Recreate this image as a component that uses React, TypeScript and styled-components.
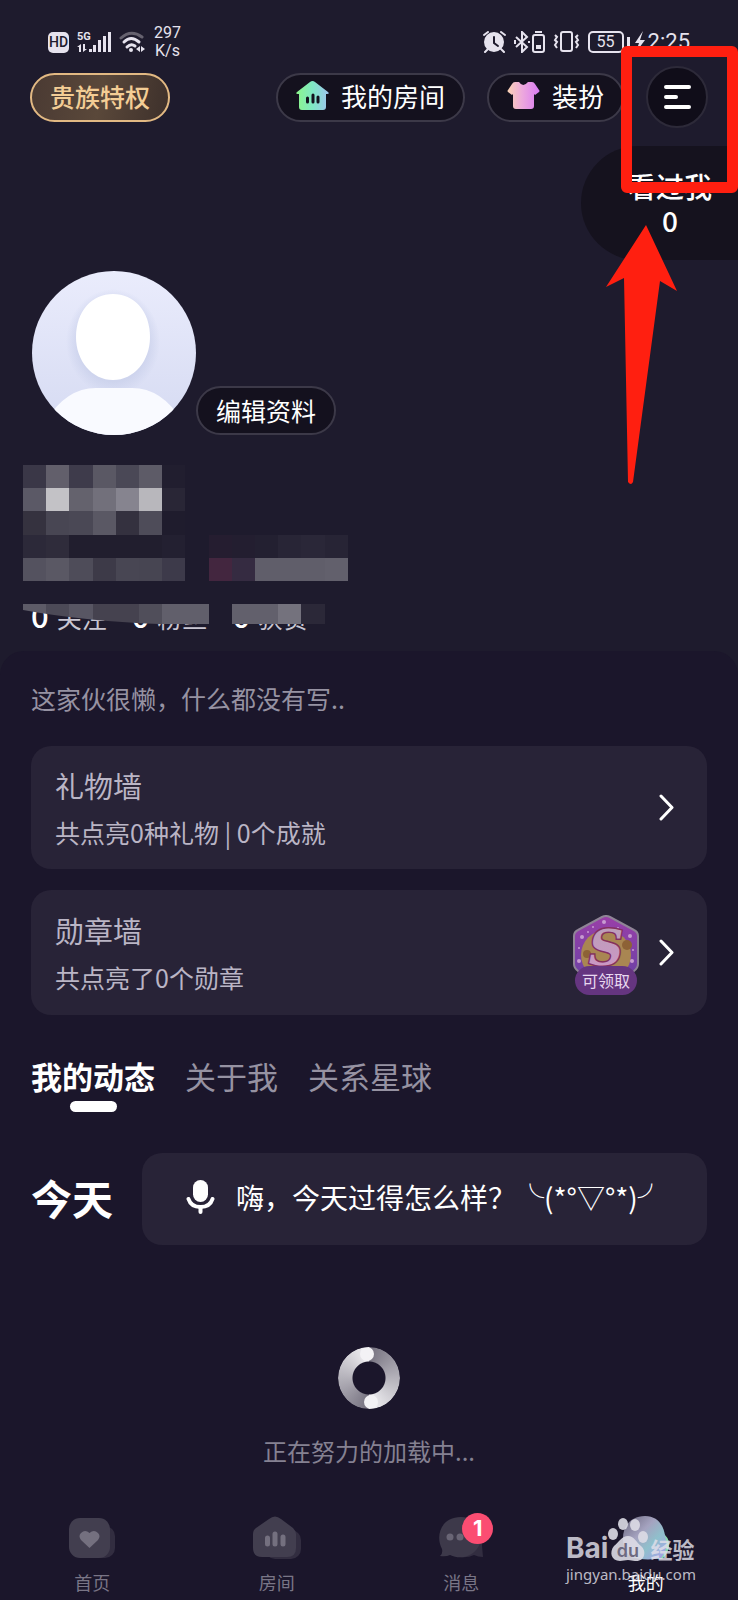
import React from "react";
import styled, { createGlobalStyle } from "styled-components";

const GlobalStyle = createGlobalStyle`
  *, *::before, *::after { box-sizing: border-box; }
  body {
    margin: 0;
    background: #1e1b2d;
    color: #fff;
    font-family: "Noto Sans CJK SC", "Noto Sans", sans-serif;
  }
  button { font: inherit; color: inherit; border: 0; background: none; padding: 0; cursor: pointer; }
  a { color: inherit; text-decoration: none; }
  h2, p { margin: 0; font-weight: 400; }
  svg { display: block; flex: none; }
`;

const Page = styled.div`
  position: relative;
  min-height: 100vh;
  display: flex;
  flex-direction: column;
  overflow: hidden;
`;

/* ---------- status bar ---------- */

const StatusBar = styled.div`
  height: 66px;
  padding: 18px 48px 0;
  display: flex;
  justify-content: space-between;
  align-items: center;
  color: #e6e3ee;
  font-family: Roboto, "Noto Sans", sans-serif;
`;

const StatusGroup = styled.div<{ $gap: number }>`
  display: flex;
  align-items: center;
  gap: ${(p) => p.$gap}px;
`;

const HdTag = styled.span`
  width: 21px;
  height: 21px;
  border-radius: 5px;
  background: #e6e3ee;
  color: #1e1b2d;
  font-size: 14px;
  line-height: 21px;
  font-weight: 500;
  text-align: center;
`;

const NetSpeed = styled.span`
  font-size: 16px;
  line-height: 18px;
  text-align: center;
`;

const BatteryLevel = styled.span`
  width: 36px;
  height: 22px;
  border: 2px solid #e6e3ee;
  border-radius: 5px;
  font-size: 16px;
  line-height: 18px;
  text-align: center;
`;

const Clock = styled.span`
  font-size: 22px;
  line-height: 26px;
`;

/* ---------- header ---------- */

const Header = styled.header`
  height: 62px;
  padding: 0 30px;
  display: flex;
  align-items: center;
  gap: 22px;
`;

const Spacer = styled.div`
  flex: 1;
`;

const Pill = styled.button<{ $size: number }>`
  height: 49px;
  padding: 0 18px 2px;
  display: flex;
  align-items: center;
  gap: 12px;
  border: 2px solid #3c3948;
  border-radius: 25px;
  background: #14111e;
  font-size: ${(p) => p.$size}px;
  line-height: 34px;
  white-space: nowrap;
`;

const NoblePill = styled(Pill)`
  border-color: #e2b983;
  background: linear-gradient(100deg, #4a3a33, #5a483a 50%, #3d302b);
  color: #f3cd95;
  font-weight: 500;
`;

const MenuButton = styled.button`
  width: 62px;
  height: 62px;
  display: flex;
  align-items: center;
  justify-content: center;
  border: 2px solid #2d2a39;
  border-radius: 50%;
  background: #100d19;
`;

/* ---------- profile ---------- */

const Visitors = styled.a`
  align-self: flex-end;
  width: 157px;
  height: 114px;
  margin-top: 18px;
  padding: 23px 0 0 21px;
  border-radius: 57px 0 0 57px;
  background: #15121e;
  font-size: 28px;
  line-height: 34px;
  text-align: center;
`;

const VisitorLine = styled.div`
  font-weight: 500;
`;

const ProfileRow = styled.div`
  margin-top: 11px;
  padding: 0 32px;
  display: flex;
  align-items: flex-end;
`;

const Identity = styled.section`
  position: relative;
  margin: 30px 23px 0;
  padding: 133px 0 19px 8px;
`;

const Mosaic = styled.svg`
  position: absolute;
  left: 0;
  top: 0;
`;

const Stats = styled.div`
  display: flex;
  gap: 25px;
  font-size: 25px;
  line-height: 34px;
  color: #c9c6d2;
`;

const Stat = styled.span`
  height: 34px;
  display: flex;
  align-items: baseline;
  gap: 8px;

  b { font-size: 31px; font-weight: 500; color: #fff; }
`;

/* ---------- content panel ---------- */

const Panel = styled.main`
  flex: 1;
  padding: 30px 31px 0;
  border-radius: 24px 24px 0 0;
  background: #1b162b;
  display: flex;
  flex-direction: column;
`;

const Bio = styled.p`
  font-size: 25px;
  line-height: 34px;
  color: #9692a2;
`;

const CardList = styled.div`
  margin-top: 31px;
  display: flex;
  flex-direction: column;
  gap: 21px;
`;

const Card = styled.a`
  padding: 19px 33px 20px 24px;
  display: flex;
  align-items: center;
  gap: 20px;
  border-radius: 20px;
  background: #282337;
  color: #bab5c5;
`;

const CardText = styled.div`
  flex: 1;
`;

const CardTitle = styled.h2`
  font-size: 29px;
  line-height: 40px;
`;

const CardNote = styled.p`
  margin-top: 10px;
  font-size: 25px;
  line-height: 34px;
`;

const Medal = styled.div`
  width: 66px;
  padding-top: 6px;
  display: flex;
  flex-direction: column;
  align-items: center;
`;

const MedalLabel = styled.span`
  position: relative;
  width: 62px;
  height: 29px;
  margin-top: -17px;
  border-radius: 15px;
  background: #653580;
  color: #e8d8f0;
  font-size: 16px;
  line-height: 28px;
  text-align: center;
`;

const Tabs = styled.nav`
  margin-top: 40px;
  display: flex;
  gap: 30px;
`;

const Tab = styled.button<{ $active?: boolean }>`
  height: 57px;
  display: flex;
  flex-direction: column;
  align-items: center;
  gap: 4px;
  font-size: 31px;
  line-height: 42px;
  font-weight: ${(p) => (p.$active ? 700 : 400)};
  color: ${(p) => (p.$active ? "#fff" : "#9692a2")};

  &::after {
    content: "";
    width: 47px;
    height: 11px;
    border-radius: 6px;
    background: ${(p) => (p.$active ? "#fff" : "transparent")};
  }
`;

const TodayRow = styled.section`
  margin-top: 41px;
  display: flex;
  align-items: center;
  gap: 29px;
`;

const TodayTitle = styled.h2`
  padding-bottom: 4px;
  font-size: 41px;
  line-height: 58px;
  font-weight: 700;
  white-space: nowrap;
`;

const MoodButton = styled.button`
  flex: 1;
  height: 92px;
  padding: 0 0 4px 44px;
  display: flex;
  align-items: center;
  gap: 21px;
  border-radius: 20px;
  background: #282337;
  font-size: 28px;
  line-height: 42px;
  white-space: nowrap;
`;

const Loading = styled.div`
  margin-top: 102px;
  display: flex;
  flex-direction: column;
  align-items: center;
  gap: 25px;
  font-size: 24px;
  line-height: 34px;
  color: #858192;
`;

/* ---------- bottom navigation ---------- */

const BottomNav = styled.nav`
  padding: 47px 0 5px;
  display: flex;
  background: #1b162b;
`;

const NavItem = styled.a<{ $active?: boolean }>`
  flex: 1;
  display: flex;
  flex-direction: column;
  align-items: center;
  gap: 9px;
  font-size: 18px;
  line-height: 26px;
  color: ${(p) => (p.$active ? "#fff" : "#797586")};
`;

const NavIcon = styled.span`
  position: relative;
  display: block;
`;

const Badge = styled.span`
  position: absolute;
  left: 24px;
  top: -3px;
  width: 31px;
  height: 31px;
  border-radius: 50%;
  background: #fb4d72;
  color: #fff;
  font: 700 22px/31px Inter, sans-serif;
  text-align: center;
`;

/* ---------- overlays ---------- */

const Highlight = styled.div`
  position: absolute;
  top: 46px;
  right: 0;
  width: 117px;
  height: 147px;
  border: 11px solid #ff1f10;
  border-radius: 6px;
  pointer-events: none;
`;

const Arrow = styled.svg`
  position: absolute;
  top: 225px;
  right: 60px;
  pointer-events: none;
`;

const Watermark = styled.div`
  position: absolute;
  right: 40px;
  bottom: 14px;
  width: 132px;
  color: rgba(226, 224, 234, 0.82);
  pointer-events: none;
`;

const WatermarkLogo = styled.div`
  height: 48px;
  display: flex;
  align-items: flex-end;
  font: 700 28px/28px Inter, sans-serif;
`;

const WatermarkCn = styled.span`
  font: 700 22px/28px "Noto Sans CJK SC", sans-serif;
  white-space: nowrap;
`;

const WatermarkUrl = styled.div`
  font: 400 15px/24px "Noto Sans", sans-serif;
  white-space: nowrap;
`;

/* ---------- drawings ---------- */

const SignalIcon = () => (
  <svg width="34" height="22" viewBox="0 0 34 22" fill="#e6e3ee">
    <text x="0" y="9" fontSize="11" fontWeight="700" fontFamily="Roboto, sans-serif">5G</text>
    <path d="M0 16l4-3v8H2v-5zM6 13h2v5h2l-4 3zM12 18h3v3h-3zM16 14h3v7h-3zM21 9h3v12h-3zM26 5h3v16h-3zM31 1h3v20h-3z" />
  </svg>
);

const WifiIcon = () => (
  <svg width="27" height="23" viewBox="0 0 27 23" fill="none" stroke="#e6e3ee" strokeWidth="3" strokeLinecap="round">
    <path d="M2 7Q12-2 23 6" stroke="#66626f" />
    <path d="M5 11Q12 4 20 11M8 16Q12 12 16 15" />
    <circle cx="12" cy="19" r="2" fill="#e6e3ee" stroke="none" />
    <path d="M21 15v6l-4-3zM22 15v6l4-3z" fill="#e6e3ee" stroke="none" />
  </svg>
);

const AlarmIcon = () => (
  <svg width="23" height="22" viewBox="0 0 23 22" fill="none" stroke="#e6e3ee" strokeWidth="2" strokeLinecap="round">
    <circle cx="11" cy="11" r="9" fill="#e6e3ee" />
    <path d="M1 4l4-3M22 4l-4-3M5 18l-3 3M18 18l3 3" />
    <path d="M11 6v6l4 3" stroke="#1e1b2d" />
  </svg>
);

const BluetoothIcon = () => (
  <svg width="31" height="22" viewBox="0 0 31 22" fill="none" stroke="#e6e3ee" strokeWidth="2">
    <path d="M2 6l11 10-5 5V1l5 5L2 16M1 9v4M15 10v2" />
    <rect x="19" y="4" width="11" height="17" rx="2" />
    <path d="M21 1h7" />
    <path d="M22 14h5v4h-5z" fill="#e6e3ee" stroke="none" />
  </svg>
);

const VibrateIcon = () => (
  <svg width="27" height="22" viewBox="0 0 27 22" fill="none" stroke="#e6e3ee" strokeWidth="2">
    <rect x="8" y="1" width="11" height="19" rx="2" />
    <path d="M2 4l2 2-2 3 2 2-2 3 2 3M25 4l-2 2 2 3-2 2 2 3-2 3" />
  </svg>
);

const BoltIcon = () => (
  <svg width="18" height="22" viewBox="0 0 18 22" fill="#e6e3ee">
    <path d="M0 6h3v11H0zM16 0L8 12h4l-3 9 9-12h-5z" />
  </svg>
);

const HouseIcon = () => (
  <svg width="33" height="30" viewBox="0 0 33 30">
    <defs>
      <linearGradient id="house" x1="0" y1="0" x2="1" y2="0">
        <stop offset="0" stopColor="#8cf58a" />
        <stop offset="0.5" stopColor="#7fe8c4" />
        <stop offset="1" stopColor="#9fc4ef" />
      </linearGradient>
    </defs>
    <path d="M14 1q2.500-2 5 0l13 10q2 2-1 2h-1v13q0 3-3 3H6q-3 0-3-3V13H2q-3 0-1-2z" fill="url(#house)" />
    <path d="M11.500 17v4M17 14v7M22 16v5" stroke="#14111e" strokeWidth="3" strokeLinecap="round" />
  </svg>
);

const ShirtIcon = () => (
  <svg width="33" height="30" viewBox="0 0 33 30">
    <defs>
      <linearGradient id="shirt" x1="0" y1="0" x2="1" y2="0">
        <stop offset="0" stopColor="#fbd3b4" />
        <stop offset="0.45" stopColor="#eda9dc" />
        <stop offset="1" stopColor="#d97bf3" />
      </linearGradient>
    </defs>
    <path d="M8 1h4q4 6 9 0h4q2 0 3 2l4 6q1 1 0 2l-4 3-1-1v12q0 3-3 3H9q-3 0-3-3V13l-1 1-4-3q-1-1 0-2l4-6q1-2 3-2z" fill="url(#shirt)" />
  </svg>
);

const MenuIcon = () => (
  <svg width="28" height="26" viewBox="0 0 28 26" stroke="#fff" strokeWidth="4" strokeLinecap="round">
    <path d="M3 3h23M3 13h10M3 23h23" />
  </svg>
);

const AvatarPicture = () => (
  <svg width="164" height="164" viewBox="0 0 164 164" role="img" aria-label="头像">
    <defs>
      <linearGradient id="avatarBg" x1="0" y1="0" x2="0" y2="1">
        <stop offset="0" stopColor="#eaecfc" />
        <stop offset="1" stopColor="#d5daf2" />
      </linearGradient>
      <radialGradient id="headShade">
        <stop offset="0.75" stopColor="#c8cfea" stopOpacity="0.7" />
        <stop offset="1" stopColor="#c8cfea" stopOpacity="0" />
      </radialGradient>
      <clipPath id="avatarClip"><circle cx="82" cy="82" r="82" /></clipPath>
    </defs>
    <g clipPath="url(#avatarClip)">
      <rect width="164" height="164" fill="url(#avatarBg)" />
      <ellipse cx="81" cy="71" rx="47" ry="53" fill="url(#headShade)" />
      <path d="M44 66C44 40 60 23 81 23s37 17 37 43c0 24-16 43-37 43S44 90 44 66z" fill="#fff" />
      <path d="M14 150Q34 117 64 117h36q30 0 50 33v20H14z" fill="#f9faff" />
    </g>
  </svg>
);

const CELL = 23.2;
const mosaicRows: { x: number; y: number; colors: string[] }[] = [
  { x: 0, y: 0, colors: ["#3a3747", "#625f6b", "#3e3b4b", "#5a5864", "#4a4856", "#5d5b67", "#211e2f"] },
  { x: 0, y: 1, colors: ["#5b5966", "#c3c2c6", "#64626d", "#72707b", "#86848f", "#b8b7bc", "#292636"] },
  { x: 0, y: 2, colors: ["#35323f", "#484653", "#4a4855", "#5a5864", "#34313f", "#4e4c59", "#1f1c2d"] },
  { x: 0, y: 3, colors: ["#2c2939", "#2f2c3b", "#211e2e", "#211e2e", "#211e2e", "#211e2e", "#232031"] },
  { x: 0, y: 4, colors: ["#54525f", "#5a5864", "#4e4c59", "#3d3a48", "#484653", "#474552", "#3d3a4a"] },
  { x: 8, y: 3, colors: ["#251d30", "#231e30", "#232031", "#282536", "#2a2738", "#272435"] },
  { x: 8, y: 4, colors: ["#43263f", "#352b41", "#605e6a", "#605e6a", "#605e6a", "#62606c"] },
];
const stripColors = ["#5d5b67", "#4c4a57", "#585663", "#45424f", "#45424f", "#504e5a", "#615f6b", "#615f6b"];
const stripTail = ["#62606c", "#62606c", "#74727d", "#2b2838"];

const NameMosaic = () => (
  <Mosaic width="326" height="160" viewBox="0 0 326 160" shapeRendering="crispEdges" aria-hidden="true">
    <defs>
      <clipPath id="strip"><path d="M0 139h326v20H136Q60 156 0 145z" /></clipPath>
    </defs>
    {mosaicRows.map((row) =>
      row.colors.map((c, i) => (
        <rect key={`${row.x}-${row.y}-${i}`} x={(row.x + i) * CELL} y={row.y * CELL} width={CELL} height={CELL} fill={c} />
      ))
    )}
    <g clipPath="url(#strip)">
      {stripColors.map((c, i) => <rect key={i} x={i * CELL} y="139" width={CELL} height="20" fill={c} />)}
      {stripTail.map((c, i) => <rect key={i} x={(9 + i) * CELL} y="139" width={CELL} height="20" fill={c} />)}
    </g>
  </Mosaic>
);

const Chevron = () => (
  <svg width="15" height="27" viewBox="0 0 15 27" fill="none" stroke="#fff" strokeWidth="3" strokeLinecap="round" strokeLinejoin="round">
    <path d="M2 2l11 11.500L2 25" />
  </svg>
);

const MedalPicture = () => (
  <svg width="66" height="68" viewBox="0 0 66 68" aria-hidden="true">
    <defs>
      <linearGradient id="medalBg" x1="0" y1="0" x2="0" y2="1">
        <stop offset="0" stopColor="#9a3fa8" />
        <stop offset="1" stopColor="#6a41a5" />
      </linearGradient>
      <linearGradient id="medalS" x1="0" y1="0" x2="0" y2="1">
        <stop offset="0" stopColor="#b9a0b8" />
        <stop offset="1" stopColor="#cf95c6" />
      </linearGradient>
      <clipPath id="medalClip"><path d="M33 3L63 18v36L54 66H12L3 54V18z" /></clipPath>
    </defs>
    <path d="M29 2q4-2 8 0l24 13q4 2 4 6v28q0 4-4 7l-10 9H15L5 56q-4-3-4-7V21q0-4 4-6z" fill="url(#medalBg)" stroke="#8f8496" strokeWidth="2" />
    <g clipPath="url(#medalClip)">
      <circle cx="33" cy="40" r="25" fill="#a98652" />
      <circle cx="54" cy="30" r="5" fill="#8d6236" />
      <circle cx="14" cy="39" r="4" fill="#8d6236" />
      <g fill="#c79bd0">
        <circle cx="31" cy="7" r="2" /><circle cx="20" cy="12" r="1" /><circle cx="45" cy="13" r="1" />
        <circle cx="9" cy="22" r="2" /><circle cx="57" cy="21" r="2" /><circle cx="15" cy="17" r="1" />
        <circle cx="6" cy="33" r="1" /><circle cx="60" cy="35" r="1" /><circle cx="6" cy="46" r="2" /><circle cx="59" cy="46" r="2" />
      </g>
      <text x="33" y="50" textAnchor="middle" fontFamily="'DejaVu Serif', serif" fontWeight="700" fontStyle="italic" fontSize="48" fill="url(#medalS)" stroke="#84305f" strokeWidth="3" paintOrder="stroke">S</text>
    </g>
  </svg>
);

const MicIcon = () => (
  <svg width="29" height="36" viewBox="0 0 29 36" fill="none" stroke="#fff" strokeLinecap="round">
    <rect x="7" y="1" width="15" height="22" rx="7.500" fill="#fff" stroke="none" />
    <path d="M2.500 20Q5 28 14.500 28T26.500 20" strokeWidth="4" />
    <path d="M14.500 29v4" strokeWidth="4" />
  </svg>
);

const Ring = styled.div`
  position: relative;
  width: 62px;
  height: 62px;
  border-radius: 50%;
  background: conic-gradient(#75717f, #f3f2f5 50%, #75717f 50%, #f3f2f5);
  mask: radial-gradient(circle, transparent 16px, #000 17px);

  &::before,
  &::after {
    content: "";
    position: absolute;
    width: 14px;
    height: 14px;
    border-radius: 50%;
    background: #f3f2f5;
  }
  &::before { left: 22px; top: 0; }
  &::after { left: 26px; bottom: 0; }
`;

const HomeIcon = () => (
  <svg width="46" height="44" viewBox="0 0 46 44">
    <rect x="9" y="10" width="37" height="32" rx="10" fill="#322d40" />
    <rect x="0" y="2" width="41" height="40" rx="11" fill="#423e4f" />
    <path d="M20.500 32L12 24q-3-4 0-7 4-4 8.500 0 4.500-4 8.500 0 3 3 0 7z" fill="#74707f" />
  </svg>
);

const RoomIcon = () => (
  <svg width="48" height="44" viewBox="0 0 48 44">
    <rect x="12" y="14" width="36" height="29" rx="10" fill="#322d40" />
    <path d="M16 3q6-5 12 0l12 9q3 3 3 6v14q0 9-9 9H9q-9 0-9-9V18q0-4 3-6z" fill="#423e4f" />
    <path d="M14.500 22v6M22 18v10M30 21v7" stroke="#74707f" strokeWidth="5" strokeLinecap="round" />
  </svg>
);

const MessageIcon = () => (
  <svg width="46" height="44" viewBox="0 0 46 44">
    <path d="M26 8c12 0 20 10 18 22l1 11q-5 0-9-2-6 3-14 2z" fill="#322d40" />
    <path d="M2 40q3-2 2-7C-3 20 3 1 23 1c13 0 20 9 20 20 0 15-16 25-31 18q-4 2-10 1z" fill="#3d394a" />
    <circle cx="12" cy="21" r="3.500" fill="#696575" />
    <circle cx="22" cy="21" r="3.500" fill="#696575" />
  </svg>
);

const MineIcon = () => (
  <svg width="48" height="44" viewBox="0 0 48 44">
    <defs>
      <linearGradient id="mineBg" x1="0" y1="0" x2="1" y2="1">
        <stop offset="0" stopColor="#68647a" />
        <stop offset="0.4" stopColor="#a5a3c0" />
        <stop offset="0.65" stopColor="#8fc0cc" />
        <stop offset="1" stopColor="#a99bea" />
      </linearGradient>
    </defs>
    <path d="M30 8q8 2 13 11 5 5 4 12-2 8-7 12H22z" fill="#8cdcae" />
    <path d="M23 0c13 0 19 10 20 20 2 5 3 14-4 22-9 2-20 2-30-1C3 36 1 29 1 22 1 9 10 0 23 0z" fill="url(#mineBg)" />
  </svg>
);

const PawIcon = () => (
  <svg width="42" height="44" viewBox="-2 0 42 44">
    <g fill="#dddbe5" fillOpacity="0.9">
      <ellipse cx="3" cy="16" rx="5" ry="6" />
      <ellipse cx="13" cy="6" rx="5" ry="6" />
      <ellipse cx="25" cy="7" rx="5" ry="6" />
      <ellipse cx="33" cy="19" rx="5" ry="6" />
      <path d="M18 18c6 0 8 6 13 10 6 5 4 16-6 15-3 0-4-1-7-1s-5 1-8 1C1 43-1 34 4 28c5-4 8-10 14-10z" />
    </g>
    <text x="18" y="39" textAnchor="middle" fontFamily="Inter, sans-serif" fontWeight="600" fontSize="18" fill="#6d6a80">du</text>
  </svg>
);

export default function App() {
  return (
    <Page>
      <GlobalStyle />
      <StatusBar>
        <StatusGroup $gap={8}>
          <HdTag>HD</HdTag>
          <SignalIcon />
          <WifiIcon />
          <NetSpeed>297<br />K/s</NetSpeed>
        </StatusGroup>
        <StatusGroup $gap={8}>
          <AlarmIcon />
          <BluetoothIcon />
          <VibrateIcon />
          <StatusGroup $gap={3}>
            <BatteryLevel>55</BatteryLevel>
            <BoltIcon />
            <Clock>2:25</Clock>
          </StatusGroup>
        </StatusGroup>
      </StatusBar>

      <Header>
        <NoblePill type="button" $size={25}>贵族特权</NoblePill>
        <Spacer />
        <Pill type="button" $size={26}><HouseIcon />我的房间</Pill>
        <Pill type="button" $size={26}><ShirtIcon />装扮</Pill>
        <MenuButton type="button" aria-label="菜单"><MenuIcon /></MenuButton>
      </Header>

      <Visitors href="#visitors">
        <VisitorLine>看过我</VisitorLine>
        <VisitorLine>0</VisitorLine>
      </Visitors>

      <ProfileRow>
        <AvatarPicture />
        <Pill type="button" $size={25}>编辑资料</Pill>
      </ProfileRow>

      <Identity>
        <Stats>
          <Stat><b>0</b>关注</Stat>
          <Stat><b>0</b>粉丝</Stat>
          <Stat><b>0</b>获赞</Stat>
        </Stats>
        <NameMosaic />
      </Identity>

      <Panel>
        <Bio>这家伙很懒，什么都没有写..</Bio>
        <CardList>
          <Card href="#gifts">
            <CardText>
              <CardTitle>礼物墙</CardTitle>
              <CardNote>共点亮0种礼物 | 0个成就</CardNote>
            </CardText>
            <Chevron />
          </Card>
          <Card href="#medals">
            <CardText>
              <CardTitle>勋章墙</CardTitle>
              <CardNote>共点亮了0个勋章</CardNote>
            </CardText>
            <Medal>
              <MedalPicture />
              <MedalLabel>可领取</MedalLabel>
            </Medal>
            <Chevron />
          </Card>
        </CardList>

        <Tabs>
          <Tab type="button" $active>我的动态</Tab>
          <Tab type="button">关于我</Tab>
          <Tab type="button">关系星球</Tab>
        </Tabs>

        <TodayRow>
          <TodayTitle>今天</TodayTitle>
          <MoodButton type="button">
            <MicIcon />
            <span>嗨，今天过得怎么样？╰(*°▽°*)╯</span>
          </MoodButton>
        </TodayRow>

        <Loading>
          <Ring />
          正在努力的加载中...
        </Loading>
      </Panel>

      <BottomNav>
        <NavItem href="#home"><NavIcon><HomeIcon /></NavIcon>首页</NavItem>
        <NavItem href="#rooms"><NavIcon><RoomIcon /></NavIcon>房间</NavItem>
        <NavItem href="#messages"><NavIcon><MessageIcon /><Badge>1</Badge></NavIcon>消息</NavItem>
        <NavItem href="#mine" $active><NavIcon><MineIcon /></NavIcon>我的</NavItem>
      </BottomNav>

      <Highlight />
      <Arrow width="72" height="262" viewBox="0 0 72 262" fill="#ff1f10">
        <path d="M40 0L71 66 54 56 27 257q-2 4-5 0L18 53 0 62z" />
      </Arrow>
      <Watermark>
        <WatermarkLogo>Bai<PawIcon /><WatermarkCn>经验</WatermarkCn></WatermarkLogo>
        <WatermarkUrl>jingyan.baidu.com</WatermarkUrl>
      </Watermark>
    </Page>
  );
}
